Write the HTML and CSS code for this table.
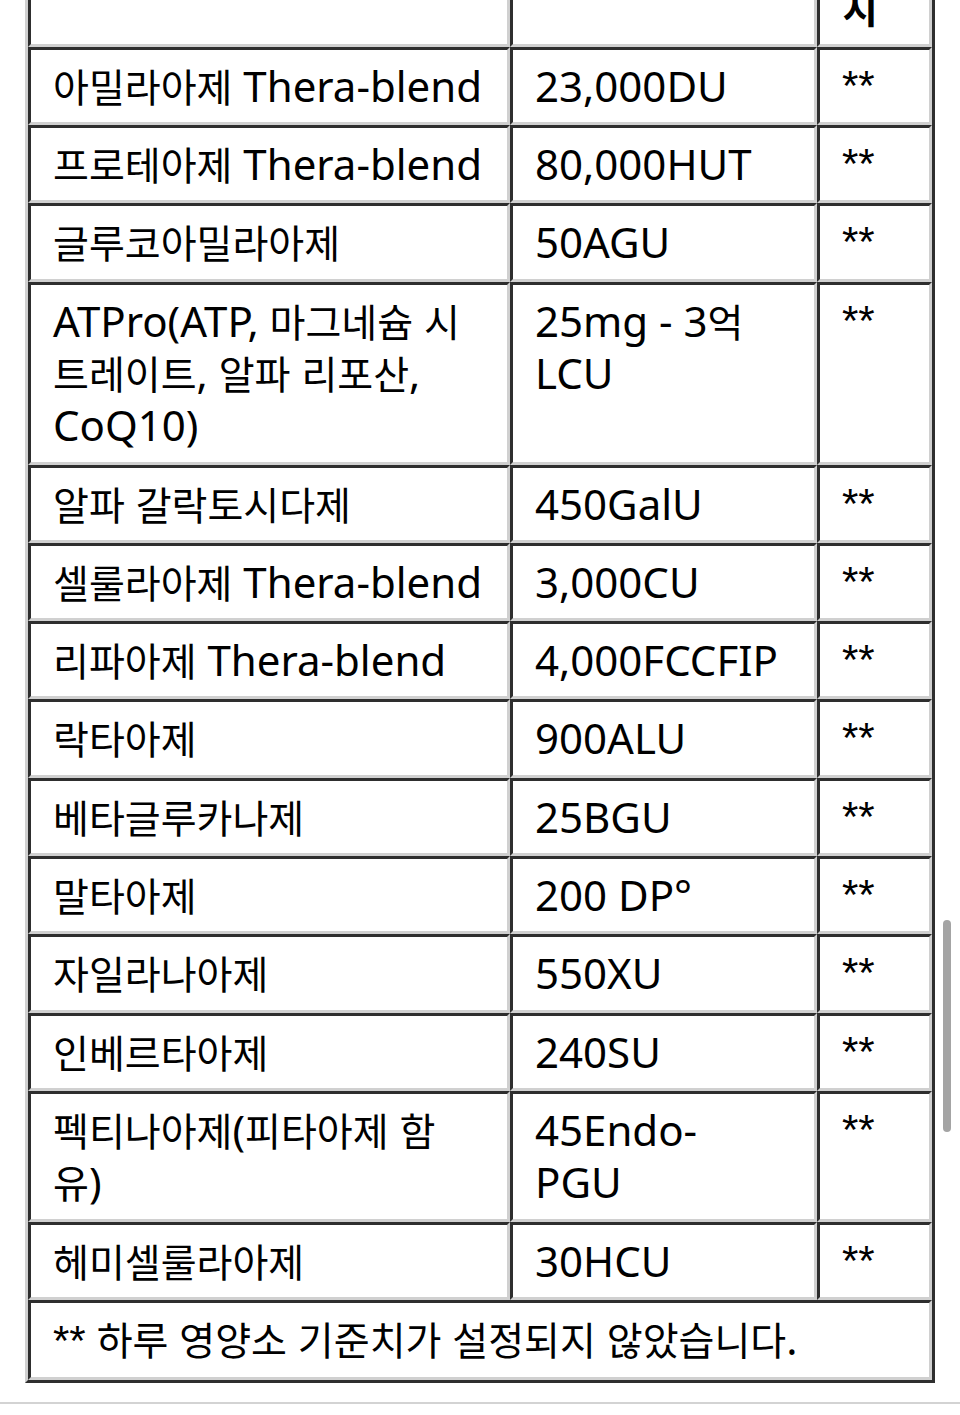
FILE: index.html
```html
<!DOCTYPE html>
<html lang="ko">
<head>
<meta charset="utf-8">
<title>성분표</title>
<link rel="stylesheet" href="styles.css">
</head>
<body>
<div class="page">
  <table class="facts">
    <thead>
      <tr>
        <th class="c1"><span class="ko">성분</span></th>
        <th class="c2"><span class="ko">함량</span></th>
        <th class="c3">%<span class="ko">일일 기준치</span></th>
      </tr>
    </thead>
    <tbody>
      <tr><td class="name"><span class="ko">아밀라아제</span> Thera-blend</td><td>23,000DU</td><td class="mark">**</td></tr>
      <tr><td class="name"><span class="ko">프로테아제</span> Thera-blend</td><td>80,000HUT</td><td class="mark">**</td></tr>
      <tr><td class="name"><span class="ko">글루코아밀라아제</span></td><td>50AGU</td><td class="mark">**</td></tr>
      <tr><td class="name">ATPro(ATP, <span class="ko">마그네슘 시트레이트</span>, <span class="ko">알파 리포산</span>, CoQ10)</td><td>25mg - 3<span class="ko">억</span> LCU</td><td class="mark">**</td></tr>
      <tr><td class="name"><span class="ko">알파 갈락토시다제</span></td><td>450GalU</td><td class="mark">**</td></tr>
      <tr><td class="name"><span class="ko">셀룰라아제</span> Thera-blend</td><td>3,000CU</td><td class="mark">**</td></tr>
      <tr><td class="name"><span class="ko">리파아제</span> Thera-blend</td><td>4,000FCCFIP</td><td class="mark">**</td></tr>
      <tr><td class="name"><span class="ko">락타아제</span></td><td>900ALU</td><td class="mark">**</td></tr>
      <tr><td class="name"><span class="ko">베타글루카나제</span></td><td>25BGU</td><td class="mark">**</td></tr>
      <tr><td class="name"><span class="ko">말타아제</span></td><td>200 DP°</td><td class="mark">**</td></tr>
      <tr><td class="name"><span class="ko">자일라나아제</span></td><td>550XU</td><td class="mark">**</td></tr>
      <tr><td class="name"><span class="ko">인베르타아제</span></td><td>240SU</td><td class="mark">**</td></tr>
      <tr><td class="name"><span class="ko">펙티나아제</span>(<span class="ko">피타아제</span> <span class="ko">함<br>유</span>)</td><td>45Endo-<br>PGU</td><td class="mark">**</td></tr>
      <tr><td class="name"><span class="ko">헤미셀룰라아제</span></td><td>30HCU</td><td class="mark">**</td></tr>
    </tbody>
    <tfoot>
      <tr><td colspan="3"><span class="stars">**</span> <span class="ko">하루 영양소 기준치가 설정되지 않았습니다</span>.</td></tr>
    </tfoot>
  </table>
</div>
<div class="rule"></div>
<div class="scrollbar"></div>
</body>
</html>
```

FILE: styles.css
```css
html, body {
  margin: 0;
  padding: 0;
  background: #ffffff;
}

body {
  color: #000000;
  font-family: "Noto Sans", "Noto Sans CJK KR", sans-serif;
}

.page {
  padding: 0 25px;
}

.facts {
  width: 100%;
  margin-top: -296px;
  border-collapse: separate;
  border-spacing: 0;
  table-layout: fixed;
  border: 3px solid;
  border-color: #d0d0d0 #2e2e2e #2e2e2e #d0d0d0;
  font-size: 42px;
  line-height: 52.3px;
}

.facts th,
.facts td {
  box-sizing: border-box;
  border: 3px solid;
  border-color: #2e2e2e #d0d0d0 #d0d0d0 #2e2e2e;
  padding: 10px 22px;
  vertical-align: top;
  text-align: left;
}

.facts th {
  font-weight: bold;
}

.c1 { width: 482px; }
.c2 { width: 307px; }

.facts td.name {
  padding-right: 16px;
}

.ko {
  font-family: "Noto Sans CJK KR", sans-serif;
  font-size: 39px;
  line-height: 1;
}

.mark,
.stars {
  font-family: "Liberation Sans", sans-serif;
}

.rule {
  margin-top: 19px;
  height: 60px;
  border-top: 2px solid #d3d3d3;
}

.scrollbar {
  position: fixed;
  top: 920px;
  right: 9px;
  width: 8px;
  height: 212px;
  border-radius: 4px;
  background: #a4a4a4;
}
```
